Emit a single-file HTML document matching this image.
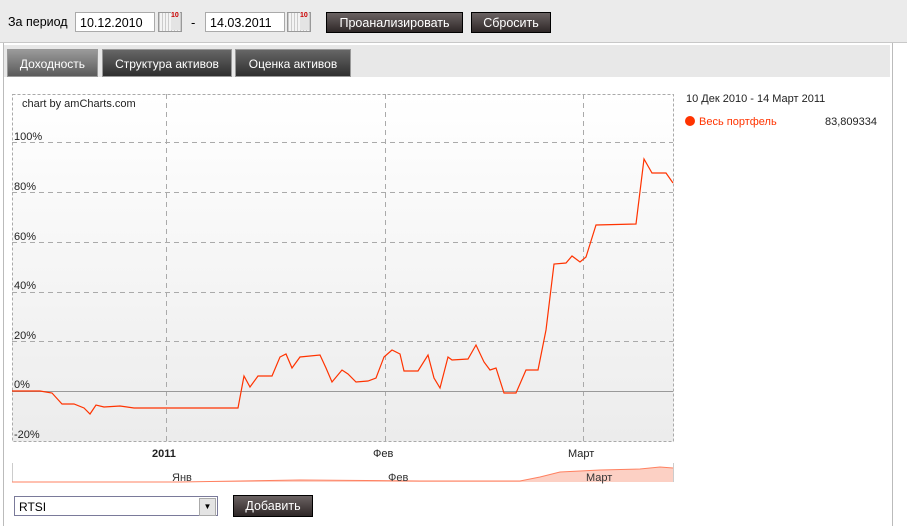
<!DOCTYPE html><html><head><meta charset="utf-8"><style>
body{margin:0;width:907px;height:526px;background:#fff;font-family:"Liberation Sans",Arial,sans-serif;font-size:12px;position:relative;overflow:hidden}
.top{position:absolute;left:0;top:0;width:907px;height:42px;background:#ebebeb;border-bottom:1px solid #c8c8c8}
.abs{position:absolute}
.inp{position:absolute;height:20px;border:1px solid #aaa;background:#fff;font-size:12.5px;line-height:20px;padding-left:4px;box-sizing:border-box}
.btn{position:absolute;height:21px;background:linear-gradient(#6a6262,#2e2727);color:#fff;font-size:12.5px;text-align:center;line-height:20px;border:1px solid #000;box-sizing:border-box}
.cal{position:absolute;width:24px;height:20px;border:1px solid #999;background:repeating-linear-gradient(90deg,#ccc 0 1px,#f4f4f4 1px 3px);box-sizing:border-box}
.tab{position:absolute;top:49px;height:28px;color:#fff;font-size:12px;text-align:center;line-height:28px;background:linear-gradient(#666,#2f2f2f);border:1px solid #999;box-sizing:border-box}
</style></head><body>
<div class="top"></div>
<div class="abs" style="left:8px;top:15px;font-size:12.5px">За период</div>
<div class="inp" style="left:75px;top:12px;width:80px">10.12.2010</div>
<div class="cal" style="left:158px;top:12px"><span style="position:absolute;right:1px;top:-1px;width:9px;height:18px;background:#e4e4e4;font-size:7px;color:#c00;font-weight:bold">10</span></div>
<div class="abs" style="left:191px;top:15px;font-size:13px">-</div>
<div class="inp" style="left:205px;top:12px;width:80px">14.03.2011</div>
<div class="cal" style="left:287px;top:12px"><span style="position:absolute;right:1px;top:-1px;width:9px;height:18px;background:#e4e4e4;font-size:7px;color:#c00;font-weight:bold">10</span></div>
<div class="btn" style="left:326px;top:12px;width:137px">Проанализировать</div>
<div class="btn" style="left:471px;top:12px;width:80px">Сбросить</div>
<div class="abs" style="left:3px;top:43px;width:888px;height:483px;border-left:1px solid #bbb;border-right:1px solid #bbb;background:#fff"></div>
<div class="abs" style="left:4px;top:45px;width:886px;height:32px;background:#e8e8e8"></div>
<div class="tab" style="left:7px;width:91px;background:linear-gradient(#9a9a9a,#5a5a5a)">Доходность</div>
<div class="tab" style="left:102px;width:130px">Структура активов</div>
<div class="tab" style="left:235px;width:116px">Оценка активов</div>
<svg class="abs" style="left:0;top:0" width="907" height="526">
<defs><linearGradient id="g" x1="0" y1="0" x2="0" y2="1"><stop offset="0" stop-color="#fff"/><stop offset="1" stop-color="#ececec"/></linearGradient></defs>
<rect x="12.5" y="94.5" width="661" height="347" fill="url(#g)" stroke="#aaa" stroke-dasharray="3,2"/>
<g stroke="#aaa" stroke-dasharray="5,4"><line x1="12" y1="142.5" x2="673" y2="142.5"/><line x1="12" y1="192.5" x2="673" y2="192.5"/><line x1="12" y1="242.5" x2="673" y2="242.5"/><line x1="12" y1="292.5" x2="673" y2="292.5"/><line x1="12" y1="341.5" x2="673" y2="341.5"/>
<line x1="166.5" y1="94" x2="166.5" y2="441"/><line x1="385.5" y1="94" x2="385.5" y2="441"/><line x1="583.5" y1="94" x2="583.5" y2="441"/></g>
<line x1="12" y1="391.5" x2="673" y2="391.5" stroke="#999"/>
<g font-size="11" fill="#222"><text x="22" y="107">chart by amCharts.com</text><text x="14" y="140">100%</text><text x="14" y="190">80%</text><text x="14" y="240">60%</text><text x="14" y="289">40%</text><text x="14" y="339">20%</text><text x="14" y="388">0%</text><text x="14" y="438">-20%</text>
<text x="152" y="457" font-weight="bold">2011</text><text x="373" y="457">Фев</text><text x="568" y="457">Март</text></g>
<polyline fill="none" stroke="#ff3300" stroke-width="1.2" points="12,391 40,391 52,393 62,404 74,404 84,408 90,414 96,405 104,407 120,406 134,408 238,408 244,376 250,387 258,376 272,376 280,357 286,354 292,368 300,357 320,355 326,368 332,382 342,370 348,374 356,382 368,381 376,378 384,357 392,350 400,354 404,371 418,371 428,355 434,378 440,388 448,357 452,360 468,359 476,345 484,362 490,370 496,368 504,393 516,393 526,370 538,370 546,330 554,264 566,263 572,256 580,262 586,257 596,225 636,224 644,159 652,173 666,173 673,183"/>
<line x1="12.5" y1="463" x2="12.5" y2="482" stroke="#ccc"/><line x1="673.5" y1="463" x2="673.5" y2="482" stroke="#ccc"/>
<polygon fill="#fcd0c4" points="12,482 180,482 300,480 420,481 520,481 540,477 560,472 580,471 600,470 640,469 660,467 673,468 673,482"/>
<polyline fill="none" stroke="#ff8060" points="12,482 180,482 300,480 420,481 520,481 540,477 560,472 580,471 600,470 640,469 660,467 673,468"/>
<g font-size="11" fill="#333"><text x="172" y="481">Янв</text><text x="388" y="481">Фев</text><text x="586" y="481">Март</text></g>
<g font-size="11"><text x="686" y="102" fill="#222">10 Дек 2010 - 14 Март 2011</text><circle cx="690" cy="121" r="5" fill="#ff3300"/><text x="699" y="125" fill="#ff3300">Весь портфель</text><text x="877" y="125" fill="#222" text-anchor="end">83,809334</text></g>
</svg>
<div class="inp" style="left:14px;top:496px;width:204px;border-color:#7a7a9a;font-size:12px">RTSI<span style="position:absolute;right:1px;top:1px;width:15px;height:16px;background:#e4e4e4;border:1px solid #aaa;font-size:8px;text-align:center;line-height:16px">▼</span></div>
<div class="btn" style="left:233px;top:495px;width:80px;height:22px">Добавить</div>
</body></html>
